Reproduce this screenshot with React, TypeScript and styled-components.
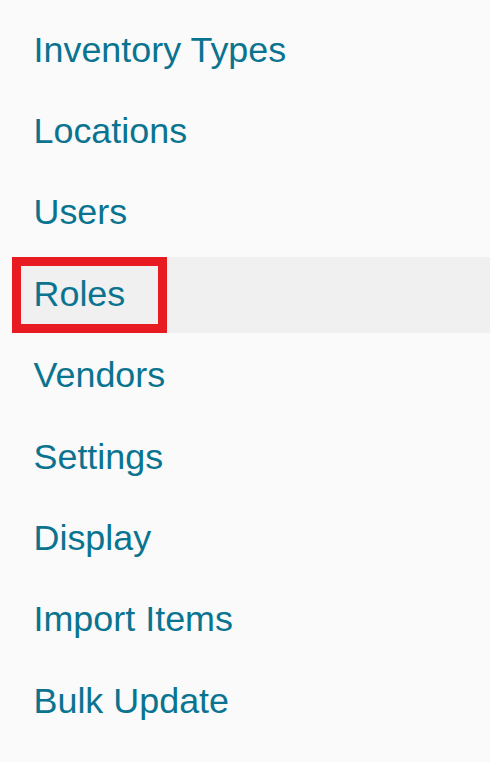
import React from "react";
import styled, { createGlobalStyle } from "styled-components";

const Global = createGlobalStyle`
  html, body {
    margin: 0;
    padding: 0;
    background: #fafafa;
  }
  body {
    font-family: "Liberation Sans", Arial, sans-serif;
  }
`;

const Nav = styled.nav`
  width: 490px;
  height: 762px;
  box-sizing: border-box;
  padding: 12.8px 0 0 12px;
  background: #fafafa;
  overflow: hidden;
`;

const List = styled.ul`
  list-style: none;
  margin: 0;
  padding: 0;
  display: flex;
  flex-direction: column;
  gap: 5.4px;
`;

const Item = styled.li<{ $active?: boolean }>`
  position: relative;
  height: 76px;
  box-sizing: border-box;
  padding: 16.8px 0 0 21.5px;
  background: ${(p) => (p.$active ? "#f0f0f0" : "transparent")};
`;

const Link = styled.a`
  display: block;
  font-size: 35.9px;
  line-height: 40px;
  color: #0a7490;
  text-decoration: none;
  white-space: nowrap;
`;

const Marker = styled.span`
  position: absolute;
  left: 0;
  top: 0;
  width: 155px;
  height: 76px;
  box-sizing: border-box;
  border: 9px solid #e81b22;
  pointer-events: none;
`;

const items = [
  "Inventory Types",
  "Locations",
  "Users",
  "Roles",
  "Vendors",
  "Settings",
  "Display",
  "Import Items",
  "Bulk Update",
];

export default function App() {
  return (
    <>
      <Global />
      <Nav>
        <List>
          {items.map((label) => (
            <Item key={label} $active={label === "Roles"}>
              <Link href="#">{label}</Link>
              {label === "Roles" && <Marker />}
            </Item>
          ))}
        </List>
      </Nav>
    </>
  );
}
